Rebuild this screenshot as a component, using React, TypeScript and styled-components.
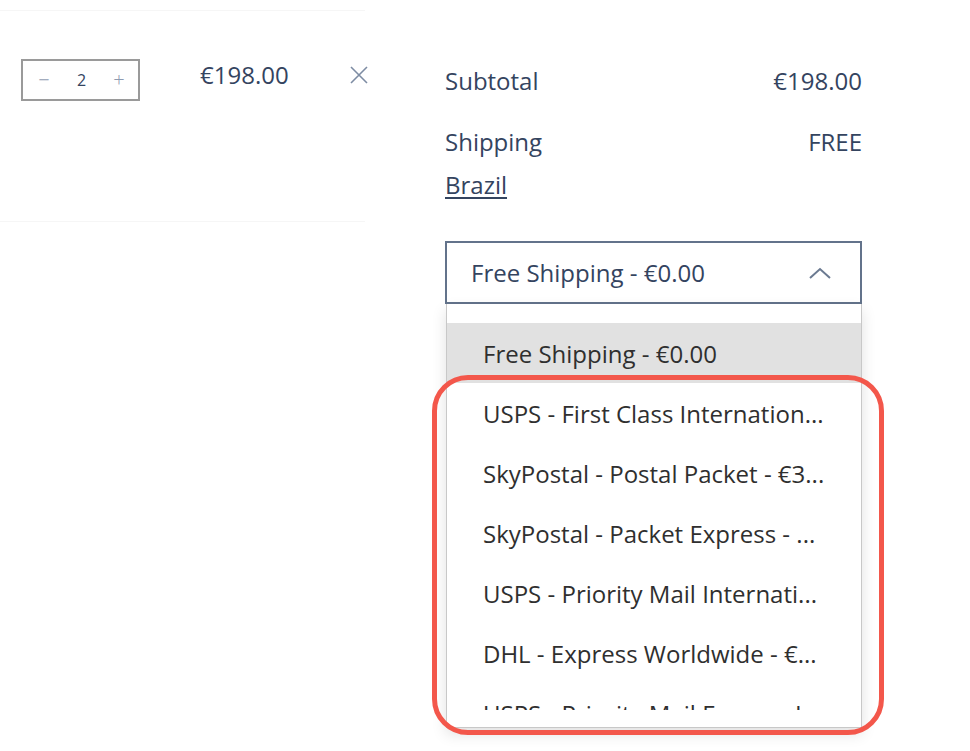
import React from "react";
import styled, { createGlobalStyle } from "styled-components";

const Global = createGlobalStyle`
  html, body { margin: 0; padding: 0; background: #ffffff; }
  body { font-family: "Open Sans", "Noto Sans", sans-serif; }
`;

const Page = styled.div`
  width: 970px;
  height: 751px;
  position: relative;
  overflow: hidden;
  display: flex;
  align-items: flex-start;
`;

const CartColumn = styled.div`
  width: 365px;
  flex-shrink: 0;
  height: 212px;
  margin-top: 10px;
  border-top: 1px solid #f6f6f6;
  border-bottom: 1px solid #f6f6f6;
  box-sizing: border-box;
`;

const ItemRow = styled.div`
  display: flex;
  align-items: flex-start;
  padding: 48px 0 0 21px;
  & > * { flex-shrink: 0; }
`;

const Qty = styled.div`
  width: 119px;
  height: 42px;
  box-sizing: border-box;
  border: 2px solid #9a9a9a;
  display: flex;
  align-items: center;
  justify-content: space-between;
  padding: 0 10px 0 12px;
  font-size: 16px;
  color: #4d5d78;
`;

const QtyBtn = styled.span<{ $muted?: boolean }>`
  width: 18px;
  text-align: center;
  color: ${(p) => (p.$muted ? "#8e9ab0" : "#5d6b85")};
  font-size: 20px;
  font-weight: 300;
  line-height: 1;
`;

const QtyValue = styled.span`
  font-size: 16px;
  color: #34445f;
`;

const LinePrice = styled.div`
  margin-left: 60px;
  margin-top: 1px;
  font-size: 24px;
  line-height: 30px;
  color: #34445f;
`;

const Remove = styled.div`
  margin-left: 60px;
  margin-top: 6px;
  width: 20px;
  height: 20px;
  display: flex;
`;

const Summary = styled.div`
  margin-left: 80px;
  margin-top: 65px;
  width: 417px;
  flex-shrink: 0;
  position: relative;
  color: #34445f;
`;

const Line = styled.div<{ $gap?: number }>`
  display: flex;
  justify-content: space-between;
  font-size: 24px;
  line-height: 32px;
  margin-top: ${(p) => p.$gap ?? 0}px;
`;

const CountryLink = styled.a`
  display: inline-block;
  margin-top: 11px;
  font-size: 24px;
  line-height: 32px;
  color: #34445f;
  text-decoration: underline;
  text-underline-offset: 3px;
  text-decoration-thickness: 1.5px;
`;

const SelectWrap = styled.div`
  position: relative;
  margin-top: 40px;
`;

const SelectBox = styled.div`
  height: 63px;
  box-sizing: border-box;
  border: 2px solid #63738b;
  display: flex;
  align-items: center;
  justify-content: space-between;
  padding: 0 28px 0 24px;
  font-size: 24px;
  color: #34445f;
`;

const Panel = styled.div`
  position: absolute;
  top: 100%;
  left: 1px;
  width: 416px;
  box-sizing: border-box;
  background: #ffffff;
  border: 1px solid #c8c8c8;
  border-top: none;
  padding: 19px 0 17px;
  box-shadow: 0 6px 14px rgba(0, 0, 0, 0.12);
`;

const OptionList = styled.div`
  height: 387px;
  overflow: hidden;
`;

const Option = styled.div<{ $active?: boolean }>`
  height: 60px;
  display: flex;
  align-items: center;
  padding-left: 36px;
  font-size: 24px;
  color: #2f2f2f;
  background: ${(p) => (p.$active ? "#e1e1e1" : "transparent")};
  white-space: nowrap;
`;

const Highlight = styled.div`
  position: absolute;
  left: -13px;
  top: 134px;
  width: 452px;
  height: 360px;
  box-sizing: border-box;
  border: 5px solid #f3574b;
  border-radius: 36px;
  pointer-events: none;
`;

const options = [
  "Free Shipping - €0.00",
  "USPS - First Class Internation...",
  "SkyPostal - Postal Packet - €3...",
  "SkyPostal - Packet Express - ...",
  "USPS - Priority Mail Internati...",
  "DHL - Express Worldwide - €...",
  "USPS - Priority Mail Express I",
];

export default function App() {
  return (
    <Page>
      <Global />
      <CartColumn>
        <ItemRow>
          <Qty>
            <QtyBtn $muted>−</QtyBtn>
            <QtyValue>2</QtyValue>
            <QtyBtn $muted>+</QtyBtn>
          </Qty>
          <LinePrice>€198.00</LinePrice>
          <Remove>
            <svg width="20" height="20" viewBox="0 0 20 20">
              <path d="M2 2 L18 18 M18 2 L2 18" stroke="#7d8ca3" strokeWidth="1.6" fill="none" />
            </svg>
          </Remove>
        </ItemRow>
      </CartColumn>
      <Summary>
        <Line>
          <span>Subtotal</span>
          <span>€198.00</span>
        </Line>
        <Line $gap={29}>
          <span>Shipping</span>
          <span>FREE</span>
        </Line>
        <CountryLink>Brazil</CountryLink>
        <SelectWrap>
          <SelectBox>
            <span>Free Shipping - €0.00</span>
            <svg width="24" height="14" viewBox="0 0 24 14">
              <path d="M2 12 L12 3 L22 12" stroke="#6b7a91" strokeWidth="2" fill="none" />
            </svg>
          </SelectBox>
          <Panel>
            <OptionList>
              {options.map((o, i) => (
                <Option key={o} $active={i === 0}>
                  {o}
                </Option>
              ))}
            </OptionList>
          </Panel>
          <Highlight />
        </SelectWrap>
      </Summary>
    </Page>
  );
}
